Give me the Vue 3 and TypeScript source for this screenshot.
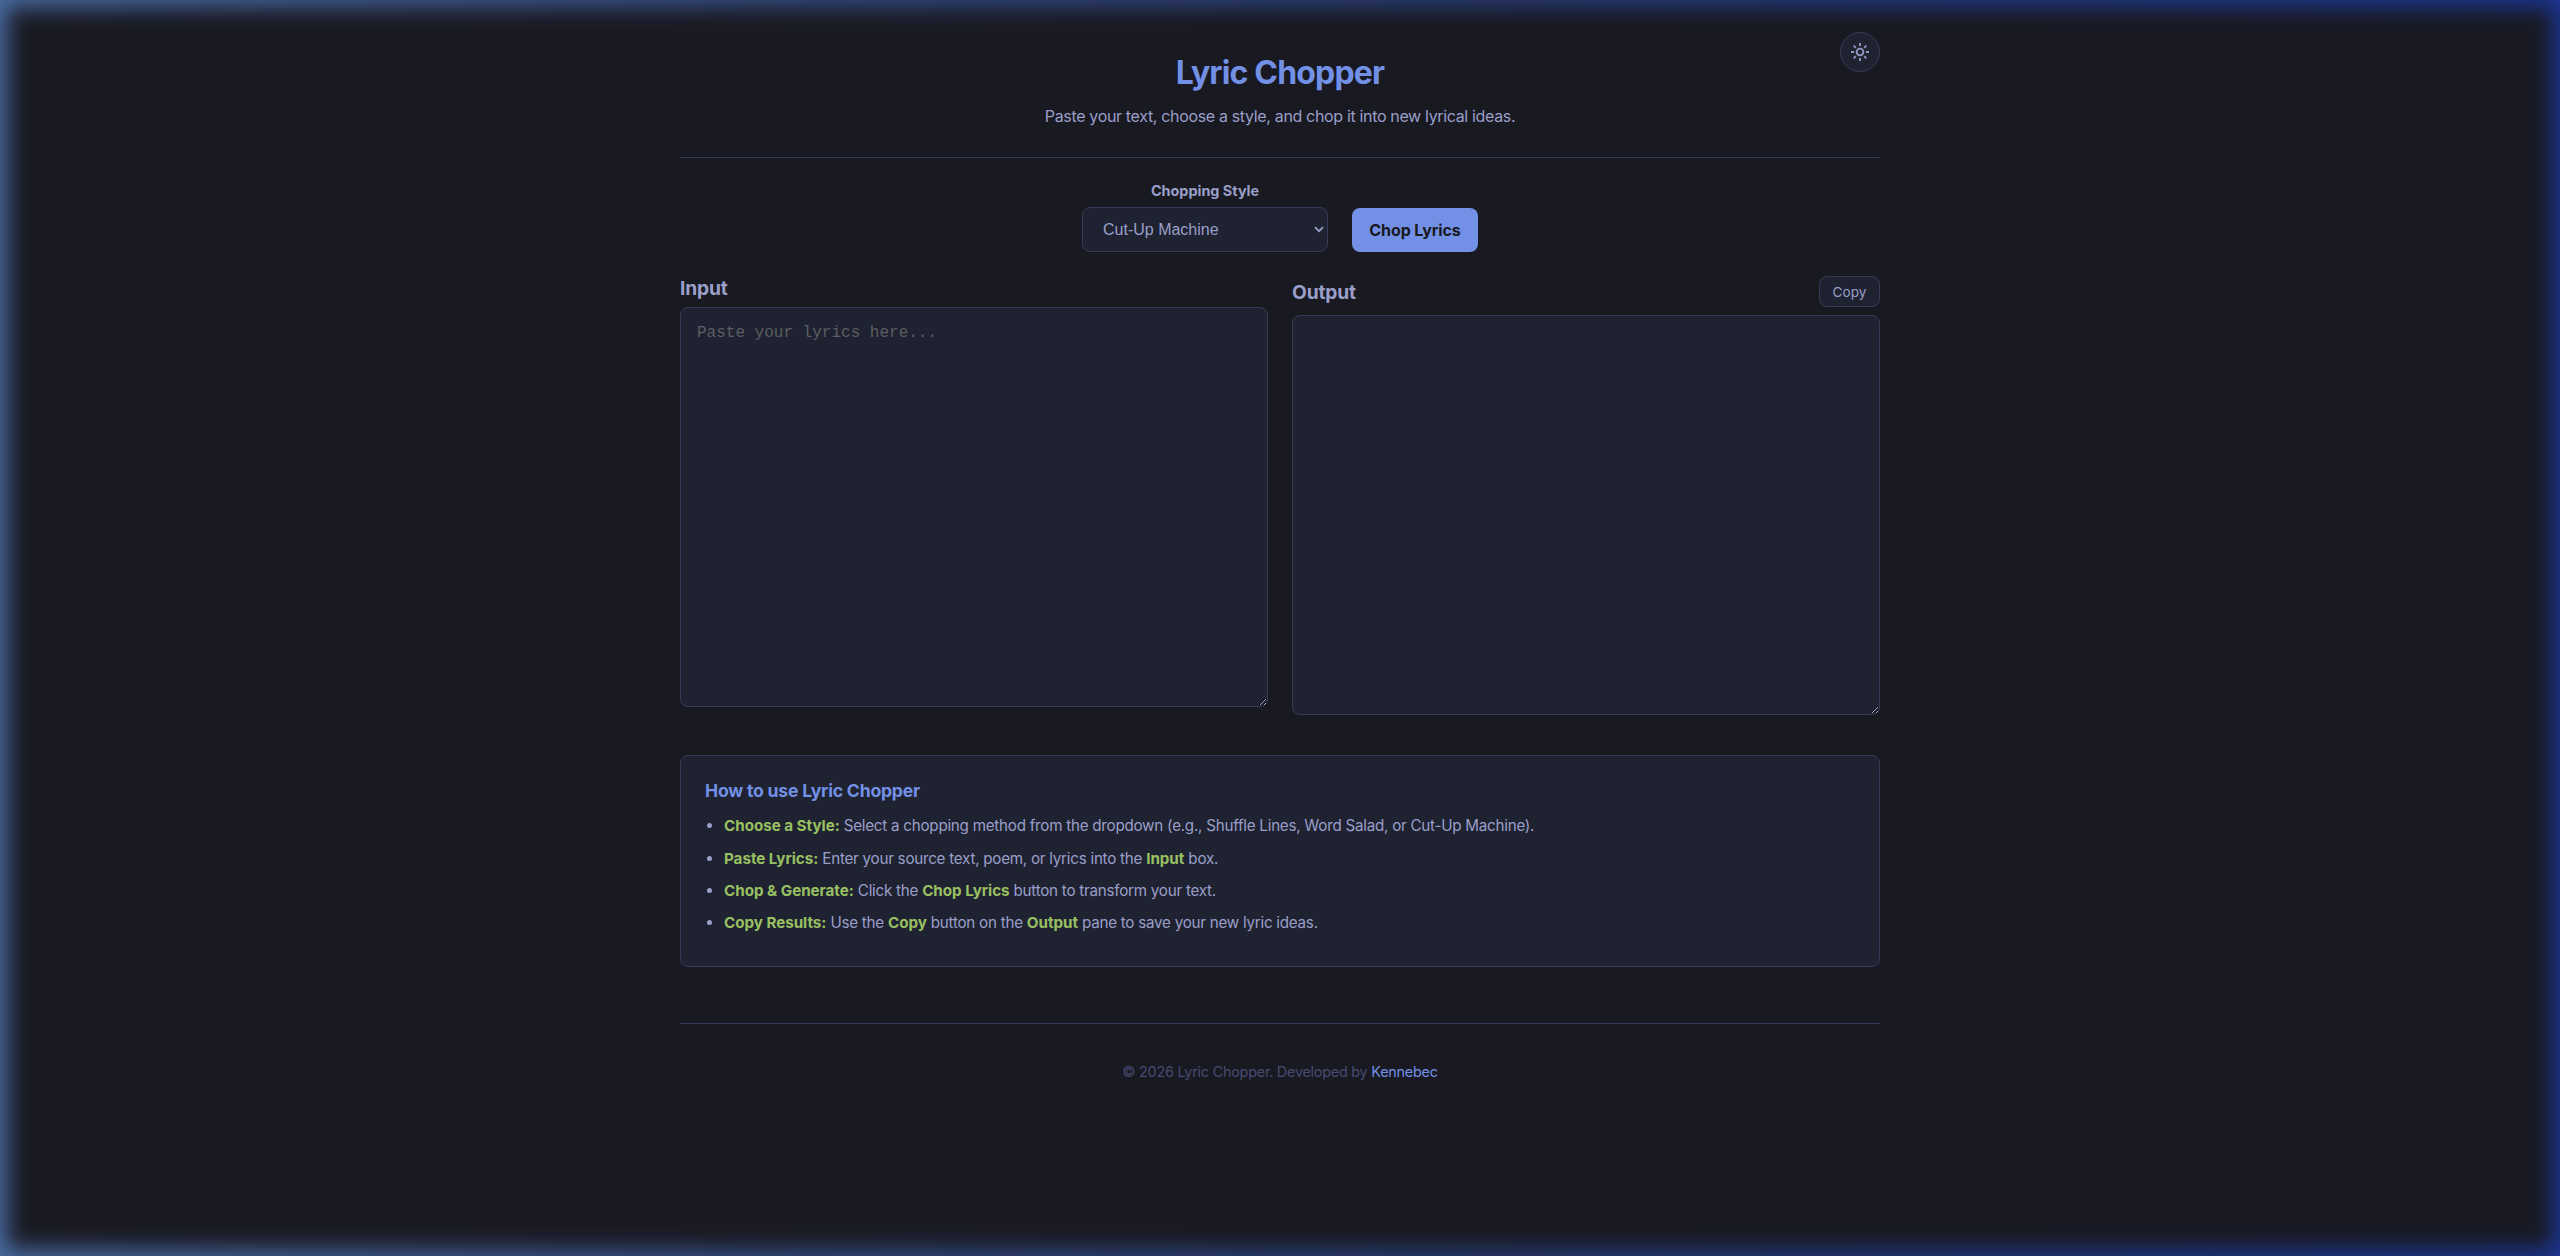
<script setup lang="ts">
import { ref } from 'vue'

interface Part {
  text: string
  strong?: boolean
}

const styles = ['Cut-Up Machine', 'Shuffle Lines', 'Word Salad']
const selected = ref('Cut-Up Machine')
const input = ref('')
const output = ref('')

const steps: Part[][] = [
  [
    { text: 'Choose a Style:', strong: true },
    { text: ' Select a chopping method from the dropdown (e.g., Shuffle Lines, Word Salad, or Cut-Up Machine).' },
  ],
  [
    { text: 'Paste Lyrics:', strong: true },
    { text: ' Enter your source text, poem, or lyrics into the ' },
    { text: 'Input', strong: true },
    { text: ' box.' },
  ],
  [
    { text: 'Chop & Generate:', strong: true },
    { text: ' Click the ' },
    { text: 'Chop Lyrics', strong: true },
    { text: ' button to transform your text.' },
  ],
  [
    { text: 'Copy Results:', strong: true },
    { text: ' Use the ' },
    { text: 'Copy', strong: true },
    { text: ' button on the ' },
    { text: 'Output', strong: true },
    { text: ' pane to save your new lyric ideas.' },
  ],
]

function chop() {
  const words = input.value.split(/\s+/).filter(Boolean)
  output.value = words.sort(() => Math.random() - 0.5).join(' ')
}
</script>

<template>
  <div class="page">
    <div class="container">
      <header class="header">
        <h1>Lyric Chopper</h1>
        <p>Paste your text, choose a style, and chop it into new lyrical ideas.</p>
        <button class="theme" aria-label="Toggle theme">
          <svg width="20" height="20" viewBox="0 0 20 20" fill="none" stroke="currentColor" stroke-width="1.9">
            <circle cx="10" cy="10" r="3.4" />
            <path
              d="M10 1v3M10 16v3M1 10h3M16 10h3M3.7 3.7l2.1 2.1M14.2 14.2l2.1 2.1M3.7 16.3l2.1-2.1M14.2 5.8l2.1-2.1"
            />
          </svg>
        </button>
      </header>

      <div class="controls">
        <div class="field">
          <label for="style">Chopping Style</label>
          <div class="select">
            <select id="style" v-model="selected">
              <option v-for="s in styles" :key="s">{{ s }}</option>
            </select>
            <svg class="chevron" width="10" height="7" viewBox="0 0 10 7" fill="none" stroke="currentColor">
              <path d="M1 1.2l4 4 4-4" stroke-width="1.7" />
            </svg>
          </div>
        </div>
        <button class="chop" @click="chop">Chop Lyrics</button>
      </div>

      <main class="panes">
        <section class="pane">
          <div class="pane-head input-head"><h2>Input</h2></div>
          <textarea v-model="input" placeholder="Paste your lyrics here..."></textarea>
        </section>
        <section class="pane">
          <div class="pane-head output-head">
            <h2>Output</h2>
            <button class="copy">Copy</button>
          </div>
          <textarea v-model="output" readonly></textarea>
        </section>
      </main>

      <section class="guide">
        <h3>How to use Lyric Chopper</h3>
        <ul>
          <li v-for="(step, i) in steps" :key="i">
            <template v-for="(part, j) in step" :key="j"
              ><strong v-if="part.strong">{{ part.text }}</strong
              ><span v-else>{{ part.text }}</span></template
            >
          </li>
        </ul>
      </section>

      <footer class="footer">
        © 2026 Lyric Chopper. Developed by <a href="#">Kennebec</a>
      </footer>
    </div>
  </div>
</template>

<style>
body {
  margin: 0;
  background: #191921;
}
</style>

<style scoped>
* {
  box-sizing: border-box;
}
.page {
  position: relative;
  height: 1256px;
  overflow: hidden;
  background: linear-gradient(90deg, #48699e 0%, #34497c 30%, #243870 60%, #1b3590 100%);
  color: #9a9fca;
  font-family: Inter, 'Liberation Sans', sans-serif;
}
.page::before {
  content: '';
  position: absolute;
  inset: 8px;
  background: #191921;
  filter: blur(10.5px);
}
.container {
  position: relative;
  width: 1200px;
  margin: 0 auto;
  padding-top: 32px;
}
.header {
  position: relative;
  height: 126px;
  padding-top: 22px;
  border-bottom: 1px solid #383b58;
  text-align: center;
}
h1,
h2,
h3,
p,
ul {
  margin: 0;
}
h1 {
  font-size: 32px;
  line-height: 38px;
  font-weight: 700;
  letter-spacing: -0.83px;
  color: #7290e6;
}
.header p {
  margin-top: 12px;
  font-size: 16px;
  line-height: 24px;
  letter-spacing: -0.34px;
}
.theme {
  position: absolute;
  top: 0;
  right: 0;
  width: 40px;
  height: 40px;
  padding: 0;
  display: flex;
  align-items: center;
  justify-content: center;
  border: 1px solid #383b58;
  border-radius: 50%;
  background: #1f2230;
  color: #9498c1;
}
.controls {
  display: flex;
  justify-content: center;
  align-items: flex-end;
  gap: 24px;
  height: 94px;
}
.field {
  width: 246px;
  text-align: center;
}
label {
  display: block;
  font-size: 14.4px;
  line-height: 20px;
  font-weight: 700;
  margin-bottom: 6px;
}
.select {
  position: relative;
}
select {
  display: block;
  appearance: none;
  width: 100%;
  height: 45px;
  padding: 0 20px;
  border: 1px solid #383b58;
  border-radius: 8px;
  background: #1f2230;
  color: #9a9fca;
  font: 400 16px 'Liberation Sans', Arial, sans-serif;
}
.chevron {
  position: absolute;
  right: 4px;
  top: 19px;
}
.chop {
  width: 126px;
  height: 44px;
  padding: 0;
  border: 0;
  border-radius: 8px;
  background: #7290e6;
  color: #191921;
  font: 700 16px Inter, sans-serif;
  letter-spacing: -0.1px;
}
.panes {
  display: flex;
  align-items: flex-start;
  gap: 24px;
  margin-top: 24px;
}
.pane {
  flex: 1;
}
.pane-head {
  display: flex;
  justify-content: space-between;
  align-items: center;
}
.input-head {
  height: 23px;
  margin-bottom: 8px;
}
.output-head {
  height: 31px;
  margin-bottom: 8px;
}
h2 {
  padding-top: 2px;
  font-size: 19.2px;
  line-height: 23px;
  font-weight: 700;
  letter-spacing: -0.15px;
}
.copy {
  width: 61px;
  height: 31px;
  padding: 0;
  border: 1px solid #383b58;
  border-radius: 8px;
  background: #1f2230;
  color: #9a9fca;
  font: 400 13.6px Inter, sans-serif;
}
textarea {
  display: block;
  width: 100%;
  height: 400px;
  padding: 16px;
  border: 1px solid #383b58;
  border-radius: 8px;
  background: #1f2230;
  color: #9a9fca;
  font: 16px/1.15 'Courier New', 'Liberation Mono', monospace;
  resize: vertical;
}
textarea::placeholder {
  color: #5c5e62;
}
.guide {
  margin-top: 40px;
  height: 212px;
  padding: 24px;
  border: 1px solid #383b58;
  border-radius: 8px;
  background: #1f2230;
}
h3 {
  font-size: 17.6px;
  line-height: 22px;
  font-weight: 700;
  letter-spacing: -0.21px;
  color: #7290e6;
}
ul {
  margin-top: 12.3px;
  padding: 0;
  list-style: none;
}
li {
  position: relative;
  height: 24.3px;
  margin-bottom: 8px;
  padding-left: 19px;
  font-size: 15.2px;
  line-height: 24px;
  letter-spacing: -0.25px;
  white-space: pre;
}
li::before {
  content: '';
  position: absolute;
  left: 2px;
  top: 9px;
  width: 5px;
  height: 5px;
  border-radius: 50%;
  background: #9a9fca;
}
strong {
  font-weight: 700;
  letter-spacing: -0.03px;
  color: #98c062;
}
.footer {
  margin-top: 56px;
  padding-top: 36px;
  border-top: 1px solid #383b58;
  text-align: center;
  font-size: 14.4px;
  line-height: 24px;
  letter-spacing: -0.24px;
  color: #474b72;
}
.footer a {
  color: #7290e6;
  text-decoration: none;
}
</style>
